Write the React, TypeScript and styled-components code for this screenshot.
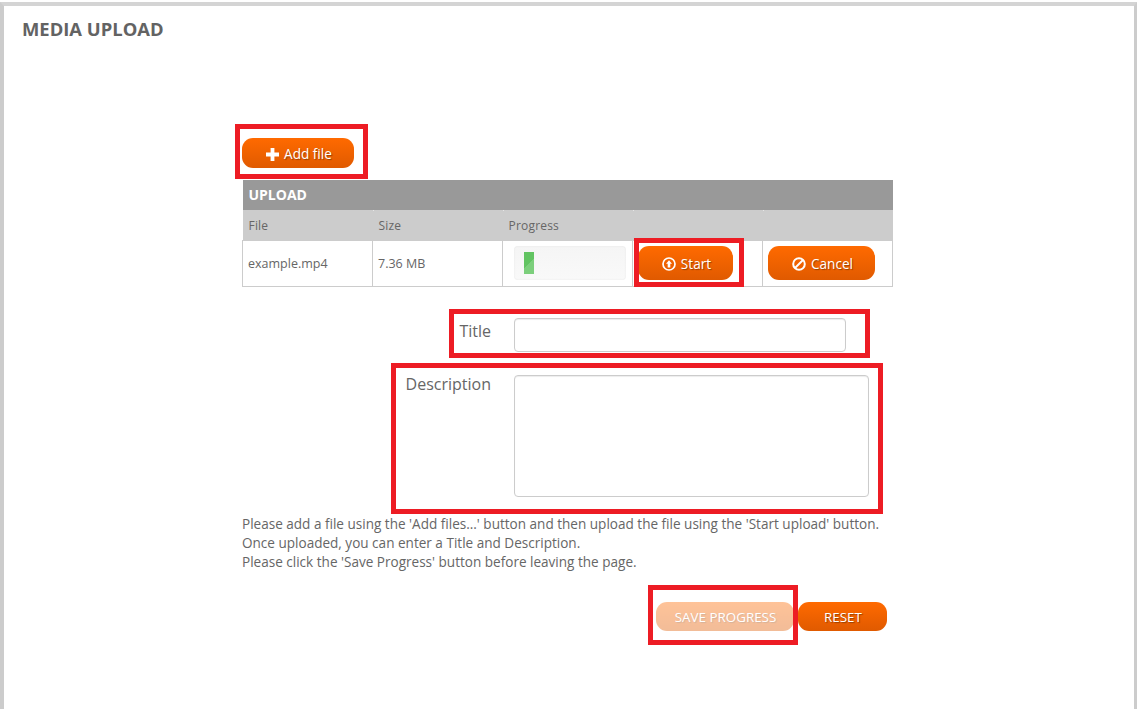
import React from 'react';
import styled, { createGlobalStyle } from 'styled-components';

const GlobalStyle = createGlobalStyle`
  html, body {
    margin: 0;
    padding: 0;
    background: #fff;
  }
  body {
    font-family: "Open Sans", "Liberation Sans", sans-serif;
    color: #666;
  }
`;

const Page = styled.div`
  box-sizing: border-box;
  height: 707px;
  margin-top: 2px;
  border-top: 4px solid #d4d4d4;
  border-left: 4px solid #ccc;
  border-right: 3px solid #ccc;
  padding: 11px 18px 0;
  overflow: hidden;
`;

const Heading = styled.h1`
  margin: 0;
  font-size: 18.4px;
  line-height: 24px;
  font-weight: 700;
  color: #636363;
`;

const Content = styled.div`
  width: 651px;
  margin: 97px 0 0 220px;
`;

const Marked = styled.div<{ $width?: number }>`
  position: relative;
  width: ${p => (p.$width ? `${p.$width}px` : 'auto')};
`;

// red annotation frame drawn over a control
const Mark = styled.span<{ $t: number; $r: number; $b: number; $l: number }>`
  position: absolute;
  top: ${p => -p.$t}px;
  right: ${p => -p.$r}px;
  bottom: ${p => -p.$b}px;
  left: ${p => -p.$l}px;
  border: 5px solid #ed1c24;
  pointer-events: none;
`;

const Button = styled.button<{ $width: number; $height: number; $faded?: boolean }>`
  display: flex;
  align-items: center;
  justify-content: center;
  gap: 5px;
  box-sizing: border-box;
  width: ${p => p.$width}px;
  height: ${p => p.$height}px;
  padding: 2px 0 0 2px;
  border: 0;
  border-radius: 11px;
  background: linear-gradient(#ff6a00, #e05a00);
  color: #fff;
  font-family: inherit;
  font-size: 13.6px;
  line-height: 20px;
  text-shadow: 1px 1px 1px rgba(0, 0, 0, 0.35);
  opacity: ${p => (p.$faded ? 0.4 : 1)};
  white-space: nowrap;
`;

const FormButton = styled(Button)`
  padding: 0 0 0 1px;
  font-size: 13.4px;
`;

const AddBar = styled.div`
  height: 30px;
  margin-bottom: 12px;
`;

const Table = styled.table`
  width: 651px;
  border-collapse: collapse;
  table-layout: fixed;
  font-size: 12px;
`;

const Caption = styled.th`
  height: 30px;
  padding: 0 6px 2px;
  box-sizing: border-box;
  background: #999;
  color: #fff;
  font-size: 14px;
  font-weight: 700;
  text-align: left;
`;

const HeadCell = styled.th`
  position: relative;
  height: 30px;
  padding: 0 6px;
  background: #ccc;
  color: #666;
  font-weight: 400;
  text-align: left;
  letter-spacing: 0.2px;

  &:not(:first-child)::before {
    content: '';
    position: absolute;
    top: 0;
    left: 0;
    width: 1px;
    height: 1px;
    background: #e6e6e6;
  }
`;

const Cell = styled.td`
  box-sizing: border-box;
  height: 46px;
  padding: 0 5px;
  border: 1px solid #ccc;
  color: #666;
  font-size: 12.5px;
`;

const ActionCell = styled(Cell)`
  padding: 0 0 1px 5px;
`;

const Track = styled.div`
  box-sizing: border-box;
  width: 112px;
  height: 34px;
  margin-left: 6px;
  padding: 6px 10px;
  border-radius: 4px;
  background: linear-gradient(#f5f5f5, #f9f9f9);
  box-shadow: inset 0 0 2px rgba(0, 0, 0, 0.08);
`;

const Fill = styled.div`
  height: 22px;
  background: linear-gradient(135deg, #62c462 50%, #7ccf7c 50%);
`;

const Row = styled.div<{ $gap: number }>`
  display: flex;
  align-items: flex-start;
  gap: 23px;
  margin-top: ${p => p.$gap}px;
`;

const Label = styled.label<{ $offset: number }>`
  width: 249px;
  margin-top: ${p => p.$offset}px;
  font-size: 16px;
  line-height: 22px;
  color: #666;
  text-align: right;
`;

const Input = styled.input`
  display: block;
  box-sizing: border-box;
  width: 332px;
  height: 34px;
  padding: 4px 8px;
  border: 1px solid #ccc;
  border-radius: 4px;
  background: #fff;
  box-shadow: inset 0 1px 1px rgba(0, 0, 0, 0.075);
  outline: none;
`;

const TextArea = styled.textarea`
  display: block;
  box-sizing: border-box;
  width: 355px;
  height: 122px;
  padding: 4px 8px;
  border: 1px solid #ccc;
  border-radius: 4px;
  background: #fff;
  box-shadow: inset 0 1px 1px rgba(0, 0, 0, 0.075);
  outline: none;
  resize: none;
`;

const Help = styled.p`
  margin: 18px 0 0;
  font-size: 13.55px;
  line-height: 19px;
  color: #666;
  white-space: nowrap;
`;

const Actions = styled.div`
  display: flex;
  gap: 4px;
  margin: 30px 0 0 414px;
`;

const PlusIcon = () => (
  <svg width="13" height="13" viewBox="0 0 13 13" fill="#fff">
    <path d="M4.6 0h3.8v4.6H13v3.8H8.4V13H4.6V8.4H0V4.6h4.6z" />
  </svg>
);

const UploadIcon = () => (
  <svg width="14" height="14" viewBox="0 0 14 14">
    <circle cx="7" cy="7" r="6" fill="none" stroke="#fff" strokeWidth="1.7" />
    <path d="M7 3.2 10 6.8H8.3V10.4H5.7V6.8H4z" fill="#fff" />
  </svg>
);

const BanIcon = () => (
  <svg width="14" height="14" viewBox="0 0 14 14" fill="none" stroke="#fff" strokeWidth="2">
    <circle cx="7" cy="7" r="5.8" />
    <path d="M3 11 11 3" />
  </svg>
);

export default function App() {
  return (
    <>
      <GlobalStyle />
      <Page>
        <Heading>MEDIA UPLOAD</Heading>
        <Content>
          <AddBar>
            <Marked $width={112}>
              <Button $width={112} $height={30}>
                <PlusIcon />
                Add file
              </Button>
              <Mark $t={14} $r={14} $b={11} $l={7} />
            </Marked>
          </AddBar>
          <Table>
            <thead>
              <tr>
                <Caption colSpan={5}>UPLOAD</Caption>
              </tr>
              <tr>
                <HeadCell>File</HeadCell>
                <HeadCell>Size</HeadCell>
                <HeadCell>Progress</HeadCell>
                <HeadCell />
                <HeadCell />
              </tr>
            </thead>
            <tbody>
              <tr>
                <Cell>example.mp4</Cell>
                <Cell>7.36 MB</Cell>
                <ActionCell>
                  <Track>
                    <Fill style={{ width: 10 }} />
                  </Track>
                </ActionCell>
                <ActionCell>
                  <Marked $width={95}>
                    <Button $width={95} $height={34}>
                      <UploadIcon />
                      Start
                    </Button>
                    <Mark $t={8} $r={11} $b={7} $l={4} />
                  </Marked>
                </ActionCell>
                <ActionCell>
                  <Button $width={107} $height={34}>
                    <BanIcon />
                    Cancel
                  </Button>
                </ActionCell>
              </tr>
            </tbody>
          </Table>
          <Row $gap={31}>
            <Label $offset={2}>Title</Label>
            <Marked>
              <Input aria-label="Title" />
              <Mark $t={9} $r={24} $b={6} $l={65} />
            </Marked>
          </Row>
          <Row $gap={23}>
            <Label $offset={-2}>Description</Label>
            <Marked>
              <TextArea aria-label="Description" />
              <Mark $t={12} $r={14} $b={17} $l={123} />
            </Marked>
          </Row>
          <Help>
            Please add a file using the 'Add files...' button and then upload the file using the 'Start upload' button.
            <br />
            Once uploaded, you can enter a Title and Description.
            <br />
            Please click the 'Save Progress' button before leaving the page.
          </Help>
          <Actions>
            <Marked $width={138}>
              <FormButton $width={138} $height={29} $faded>
                SAVE PROGRESS
              </FormButton>
              <Mark $t={17} $r={4} $b={14} $l={8} />
            </Marked>
            <FormButton $width={89} $height={29}>
              RESET
            </FormButton>
          </Actions>
        </Content>
      </Page>
    </>
  );
}
